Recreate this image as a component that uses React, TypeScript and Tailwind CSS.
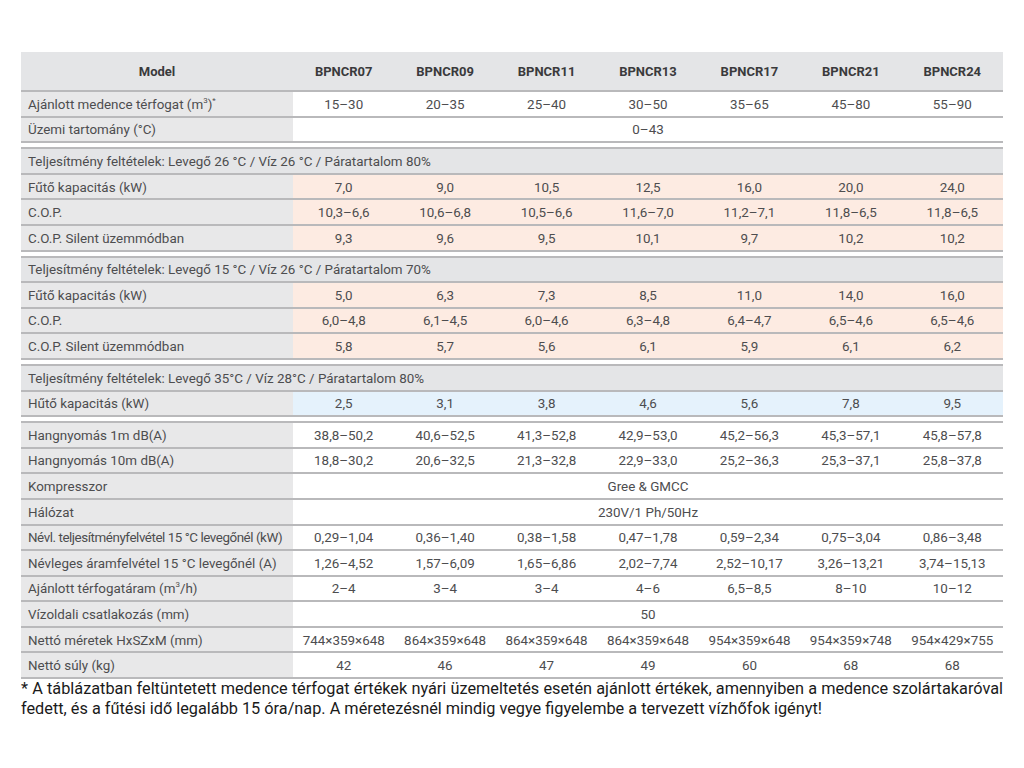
import React from 'react';

const MODELS = ['BPNCR07', 'BPNCR09', 'BPNCR11', 'BPNCR13', 'BPNCR17', 'BPNCR21', 'BPNCR24'];

type Row = { label: React.ReactNode; values: string[] | string; tone?: 'white' | 'warm' | 'cool'; tight?: boolean };

const general: Row[] = [
  { label: <>Ajánlott medence térfogat (m<sup className="text-[8px]">3</sup>)<sup className="text-[8px]">*</sup></>, values: ['15–30', '20–35', '25–40', '30–50', '35–65', '45–80', '55–90'] },
  { label: 'Üzemi tartomány (°C)', values: '0–43' },
];

const heat26: Row[] = [
  { label: 'Fűtő kapacitás (kW)', values: ['7,0', '9,0', '10,5', '12,5', '16,0', '20,0', '24,0'], tone: 'warm' },
  { label: 'C.O.P.', values: ['10,3–6,6', '10,6–6,8', '10,5–6,6', '11,6–7,0', '11,2–7,1', '11,8–6,5', '11,8–6,5'], tone: 'warm' },
  { label: 'C.O.P. Silent üzemmódban', values: ['9,3', '9,6', '9,5', '10,1', '9,7', '10,2', '10,2'], tone: 'warm' },
];

const heat15: Row[] = [
  { label: 'Fűtő kapacitás (kW)', values: ['5,0', '6,3', '7,3', '8,5', '11,0', '14,0', '16,0'], tone: 'warm' },
  { label: 'C.O.P.', values: ['6,0–4,8', '6,1–4,5', '6,0–4,6', '6,3–4,8', '6,4–4,7', '6,5–4,6', '6,5–4,6'], tone: 'warm' },
  { label: 'C.O.P. Silent üzemmódban', values: ['5,8', '5,7', '5,6', '6,1', '5,9', '6,1', '6,2'], tone: 'warm' },
];

const cool35: Row[] = [
  { label: 'Hűtő kapacitás (kW)', values: ['2,5', '3,1', '3,8', '4,6', '5,6', '7,8', '9,5'], tone: 'cool' },
];

const misc: Row[] = [
  { label: 'Hangnyomás 1m dB(A)', values: ['38,8–50,2', '40,6–52,5', '41,3–52,8', '42,9–53,0', '45,2–56,3', '45,3–57,1', '45,8–57,8'] },
  { label: 'Hangnyomás 10m dB(A)', values: ['18,8–30,2', '20,6–32,5', '21,3–32,8', '22,9–33,0', '25,2–36,3', '25,3–37,1', '25,8–37,8'] },
  { label: 'Kompresszor', values: 'Gree & GMCC' },
  { label: 'Hálózat', values: '230V/1 Ph/50Hz' },
  { label: 'Névl. teljesítményfelvétel 15 °C levegőnél (kW)', values: ['0,29–1,04', '0,36–1,40', '0,38–1,58', '0,47–1,78', '0,59–2,34', '0,75–3,04', '0,86–3,48'], tight: true },
  { label: 'Névleges áramfelvétel 15 °C levegőnél (A)', values: ['1,26–4,52', '1,57–6,09', '1,65–6,86', '2,02–7,74', '2,52–10,17', '3,26–13,21', '3,74–15,13'] },
  { label: <>Ajánlott térfogatáram (m<sup className="text-[8px]">3</sup>/h)</>, values: ['2–4', '3–4', '3–4', '4–6', '6,5–8,5', '8–10', '10–12'] },
  { label: 'Vízoldali csatlakozás (mm)', values: '50' },
  { label: 'Nettó méretek HxSZxM (mm)', values: ['744×359×648', '864×359×648', '864×359×648', '864×359×648', '954×359×648', '954×359×748', '954×429×755'] },
  { label: 'Nettó súly (kg)', values: ['42', '46', '47', '49', '60', '68', '68'] },
];

const toneBg = {
  white: 'bg-white',
  warm: 'bg-[#fdebe2]',
  cool: 'bg-[#e5f2fc]',
};

function DataRow({ row }: { row: Row }) {
  const bg = toneBg[row.tone ?? 'white'];
  return (
    <div className="grid grid-cols-[272px_repeat(7,1fr)] h-[25.6px] border-b-2 border-[#b9b9bb] text-[13.4px] text-[#4d4d4f]">
      <div className={`bg-[#e8e8e9] pl-[7px] pt-[2px] flex items-center whitespace-nowrap ${row.tight ? 'tracking-[-0.45px]' : ''}`}>
        {row.label}
      </div>
      {typeof row.values === 'string' ? (
        <div className={`col-span-7 ${bg} pt-[2px] flex items-center justify-center`}>{row.values}</div>
      ) : (
        row.values.map((v, i) => (
          <div key={i} className={`${bg} pt-[2px] flex items-center justify-center whitespace-nowrap`}>{v}</div>
        ))
      )}
    </div>
  );
}

function SectionHead({ text }: { text: string }) {
  return (
    <div className="h-[25.6px] border-b-2 border-[#b9b9bb] bg-[#e4e5e7] pl-[7px] pt-[2px] flex items-center text-[13.4px] text-[#4d4d4f]">
      {text}
    </div>
  );
}

function Group({ children }: { children: React.ReactNode }) {
  return <div className="mt-[4px] border-t-2 border-[#b9b9bb]">{children}</div>;
}

export default function App() {
  return (
    <div className="w-[1024px] h-[768px] bg-white pt-[52px] pl-[21px]" style={{ fontFamily: 'Roboto, "Noto Sans", sans-serif' }}>
      <div className="w-[982px]">
        <div>
          <div className="grid grid-cols-[272px_repeat(7,1fr)] h-[40px] border-b-2 border-[#b9b9bb] bg-[#e4e5e7] pt-[2px] text-[13px] font-bold text-[#3a3a3c]">
            <div className="flex items-center justify-center">Model</div>
            {MODELS.map((m) => (
              <div key={m} className="flex items-center justify-center">{m}</div>
            ))}
          </div>
          {general.map((r, i) => <DataRow key={i} row={r} />)}
        </div>

        <Group>
          <SectionHead text="Teljesítmény feltételek: Levegő 26 °C / Víz 26 °C / Páratartalom 80%" />
          {heat26.map((r, i) => <DataRow key={i} row={r} />)}
        </Group>

        <Group>
          <SectionHead text="Teljesítmény feltételek: Levegő 15 °C / Víz 26 °C / Páratartalom 70%" />
          {heat15.map((r, i) => <DataRow key={i} row={r} />)}
        </Group>

        <Group>
          <SectionHead text="Teljesítmény feltételek: Levegő 35°C / Víz 28°C / Páratartalom 80%" />
          {cool35.map((r, i) => <DataRow key={i} row={r} />)}
        </Group>

        <Group>
          {misc.map((r, i) => <DataRow key={i} row={r} />)}
        </Group>

        <p className="text-[16.3px] leading-[20px] text-[#1a1a1a] text-justify">
          * A táblázatban feltüntetett medence térfogat értékek nyári üzemeltetés esetén ajánlott értékek, amennyiben a medence szolártakaróval fedett, és a fűtési idő legalább 15 óra/nap. A méretezésnél mindig vegye figyelembe a tervezett vízhőfok igényt!
        </p>
      </div>
    </div>
  );
}
